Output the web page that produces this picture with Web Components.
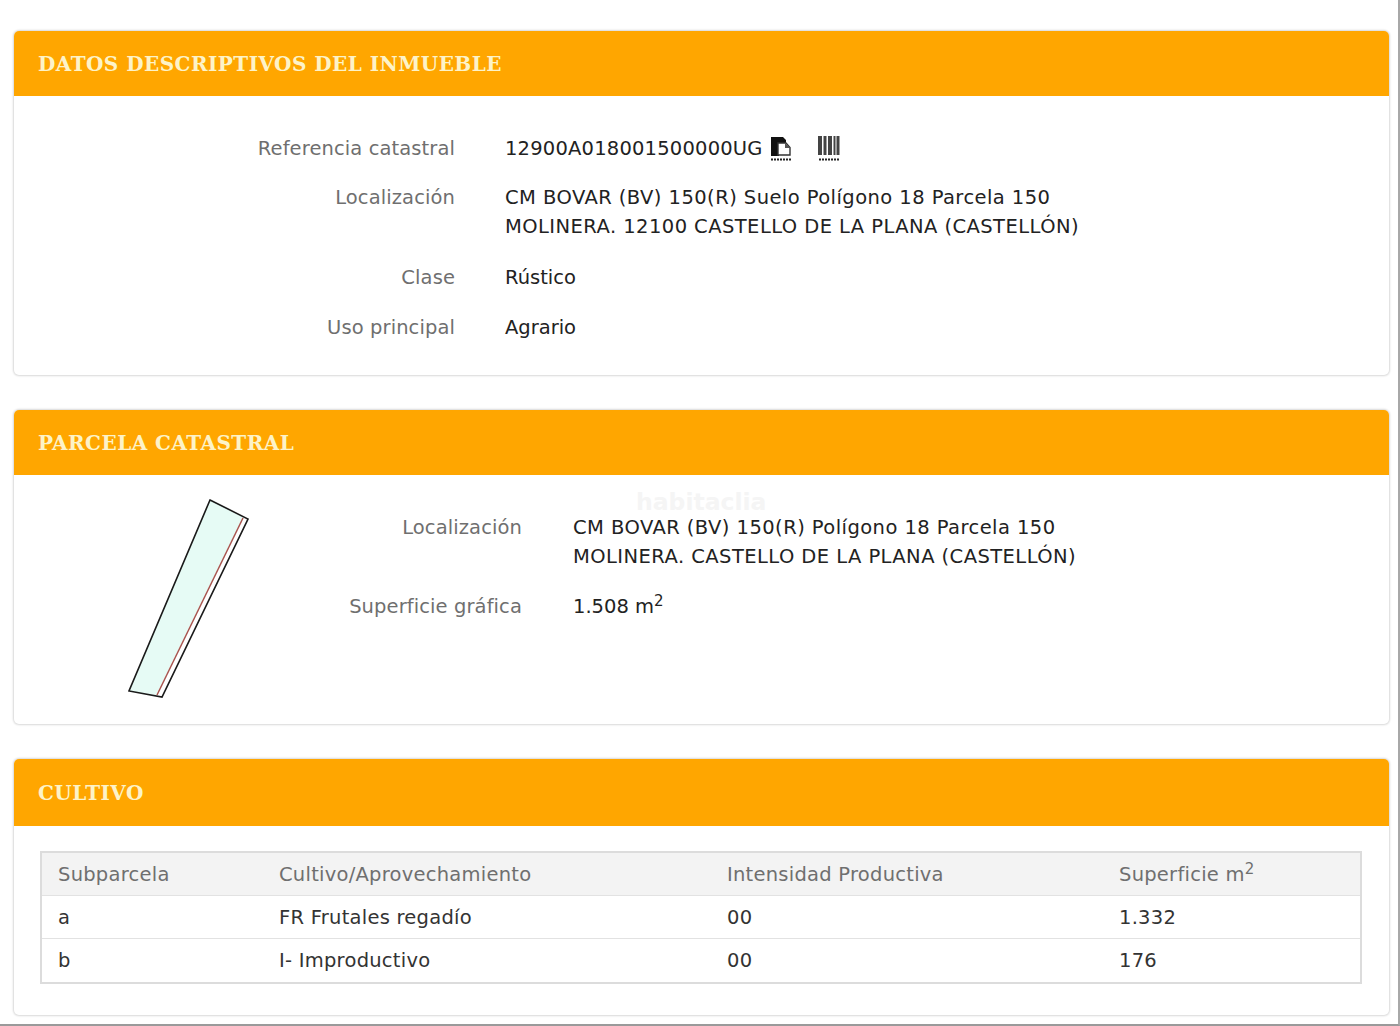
<!DOCTYPE html>
<html lang="es">
<head>
<meta charset="utf-8">
<title>Datos del inmueble</title>
<style>
  html, body { margin: 0; padding: 0; background: #fff; }
  body {
    height: 1026px;
    box-sizing: border-box;
    overflow: hidden;
    font-family: "DejaVu Sans", sans-serif;
    border-bottom: 2px solid #9a9a9a;
    border-right: 2px solid #a8a8a8;
  }
  .wide { letter-spacing: .44px; }
  .code { letter-spacing: .2px; }
</style>
</head>
<body>
<sede-page>
  <info-panel title="DATOS DESCRIPTIVOS DEL INMUEBLE" style="--body-height:279px">
    <data-list label-width="441px" gap="50px">
      <data-row label="Referencia catastral"><span class="code">12900A018001500000UG</span><doc-icons></doc-icons></data-row>
      <data-row label="Localización"><span class="wide">CM BOVAR (BV) 150(R) Suelo Polígono 18 Parcela 150<br>MOLINERA. 12100 CASTELLO DE LA PLANA (CASTELLÓN)</span></data-row>
      <data-row label="Clase" style="margin-top:2px">Rústico</data-row>
      <data-row label="Uso principal" style="margin-top:1px">Agrario</data-row>
    </data-list>
  </info-panel>
  <info-panel title="PARCELA CATASTRAL" style="--body-height:249px">
    <parcel-layout>
      <parcel-map slot="map"></parcel-map>
      <data-list label-width="232px" gap="51px" style="--list-gap:21px">
        <data-row label="Localización"><span class="wide">CM BOVAR (BV) 150(R) Polígono 18 Parcela 150<br>MOLINERA. CASTELLO DE LA PLANA (CASTELLÓN)</span></data-row>
        <data-row label="Superficie gráfica">1.508 m<sup>2</sup></data-row>
      </data-list>
    </parcel-layout>
  </info-panel>
  <info-panel title="CULTIVO" style="--body-height:189px;--head-height:67px">
    <crop-table></crop-table>
  </info-panel>
</sede-page>

<script>
class SedePage extends HTMLElement {
  constructor() {
    super();
    this.attachShadow({ mode: "open" });
    this.shadowRoot.innerHTML = `
      <style>
        :host { display: flex; flex-direction: column; gap: 35px; padding: 31px 9px 0 14px; }
      </style>
      <slot></slot>`;
  }
}

class InfoPanel extends HTMLElement {
  constructor() {
    super();
    this.attachShadow({ mode: "open" });
    this.shadowRoot.innerHTML = `
      <style>
        :host {
          display: block;
          background: #fff;
          border-radius: 5px;
          box-shadow: 0 0 2px 1px #d8d8d8;
          overflow: hidden;
        }
        h2 {
          margin: 0;
          height: var(--head-height, 65px);
          box-sizing: border-box;
          display: flex;
          align-items: center;
          padding-left: 24px;
          background: #ffa600;
          color: #fdf3c8;
          font: bold 20px "DejaVu Serif", serif;
          letter-spacing: .45px;
        }
        .body { height: var(--body-height); box-sizing: border-box; }
      </style>
      <h2></h2>
      <div class="body"><slot></slot></div>`;
  }
  connectedCallback() {
    this.shadowRoot.querySelector("h2").textContent = this.getAttribute("title");
  }
}

class DataList extends HTMLElement {
  constructor() {
    super();
    this.attachShadow({ mode: "open" });
    this.shadowRoot.innerHTML = `
      <style>
        :host { display: flex; flex-direction: column; padding-top: 38px; row-gap: var(--list-gap, 20px); }
      </style>
      <slot></slot>`;
  }
  connectedCallback() {
    this.style.setProperty("--label-width", this.getAttribute("label-width"));
    this.style.setProperty("--label-gap", this.getAttribute("gap"));
  }
}

class DataRow extends HTMLElement {
  constructor() {
    super();
    this.attachShadow({ mode: "open" });
    this.shadowRoot.innerHTML = `
      <style>
        :host { display: flex; font-size: 19.5px; line-height: 29px; color: #222; }
        .label { width: var(--label-width); flex: none; text-align: right; color: #6f6f6f; margin-right: var(--label-gap); letter-spacing: .1px; }
        ::slotted(sup) { font-size: 15px; line-height: 0; }
      </style>
      <div class="label"></div>
      <div class="value"><slot></slot></div>`;
  }
  connectedCallback() {
    this.shadowRoot.querySelector(".label").textContent = this.getAttribute("label");
  }
}

class DocIcons extends HTMLElement {
  constructor() {
    super();
    this.attachShadow({ mode: "open" });
    this.shadowRoot.innerHTML = `
      <style>
        :host { display: inline-flex; gap: 26px; vertical-align: -6px; margin-left: 7px; }
        svg { display: block; }
      </style>
      <svg width="22" height="25" viewBox="0 0 22 25">
        <path d="M1 1h12l3 3v3h-7v13H1z" fill="#111"/>
        <path d="M8 7h8l4 4.500V19H8z" fill="#fff" stroke="#333" stroke-width="1.4"/>
        <path d="M15 7v5h5z" fill="#555"/>
        <path d="M1 23.500h20" stroke="#222" stroke-width="2" stroke-dasharray="2 1"/>
      </svg>
      <svg width="22" height="25" viewBox="0 0 22 25">
        <path d="M0 0h4v19H0zM5.500 0h3v19h-3zM10 0h4v19h-4zM15.500 0h2v19h-2zM18.500 0h3v19h-3z" fill="#444"/>
        <path d="M1 23.500h20" stroke="#222" stroke-width="2" stroke-dasharray="2 1"/>
      </svg>`;
  }
}

class ParcelLayout extends HTMLElement {
  constructor() {
    super();
    this.attachShadow({ mode: "open" });
    this.shadowRoot.innerHTML = `
      <style>
        :host { display: flex; position: relative; }
        .map { flex: none; width: 276px; }
        .info { flex: 1; }
        .mark {
          position: absolute;
          left: 622px;
          top: 16px;
          color: #f5f5f5;
          font-size: 23.5px;
          line-height: 22px;
          font-weight: bold;
        }
      </style>
      <div class="map"><slot name="map"></slot></div>
      <div class="info"><slot></slot></div>
      <div class="mark">habitaclia</div>`;
  }
}

class ParcelMap extends HTMLElement {
  constructor() {
    super();
    this.attachShadow({ mode: "open" });
    this.shadowRoot.innerHTML = `
      <style>
        :host { display: block; padding: 22px 0 0 112px; }
        svg { display: block; }
      </style>
      <svg width="126" height="204" viewBox="0 0 126 204">
        <path d="M84 3 L117 20 L30 198 L3 194 Z" fill="#e6fbf5"/>
        <path d="M117 21 L31 198" stroke="#a8554f" stroke-width="1.5" fill="none"/>
        <path d="M84 3 L122 22 L36 200 L3 194 Z" fill="none" stroke="#1a1a1a" stroke-width="1.6"/>
      </svg>`;
  }
}

class CropTable extends HTMLElement {
  constructor() {
    super();
    this.attachShadow({ mode: "open" });
    this.shadowRoot.innerHTML = `
      <style>
        :host { display: block; padding: 25px 26px 0 26px; }
        table {
          width: 1322px;
          table-layout: fixed;
          border-collapse: collapse;
          border: 2px solid #dcdcdc;
          font-size: 19.5px;
          letter-spacing: .25px;
          color: #333;
        }
        th, td { height: 42px; padding: 0 0 0 17px; text-align: left; font-weight: normal; border-top: 1px solid #e2e2e2; }
        th { background: #f3f3f3; color: #6f6f6f; border-top: 0; }
        tr:last-child td { height: 43px; }
        th:first-child, td:first-child { padding-left: 16px; }
        sup { font-size: 15px; line-height: 0; }
      </style>
      <table>
        <colgroup><col style="width:221px"><col style="width:448px"><col style="width:392px"><col></colgroup>
        <thead>
          <tr><th>Subparcela</th><th>Cultivo/Aprovechamiento</th><th>Intensidad Productiva</th><th>Superficie m<sup>2</sup></th></tr>
        </thead>
        <tbody>
          <tr><td>a</td><td>FR Frutales regadío</td><td>00</td><td>1.332</td></tr>
          <tr><td>b</td><td>I- Improductivo</td><td>00</td><td>176</td></tr>
        </tbody>
      </table>`;
  }
}

customElements.define("sede-page", SedePage);
customElements.define("info-panel", InfoPanel);
customElements.define("data-list", DataList);
customElements.define("data-row", DataRow);
customElements.define("doc-icons", DocIcons);
customElements.define("parcel-layout", ParcelLayout);
customElements.define("parcel-map", ParcelMap);
customElements.define("crop-table", CropTable);
</script>
</body>
</html>
